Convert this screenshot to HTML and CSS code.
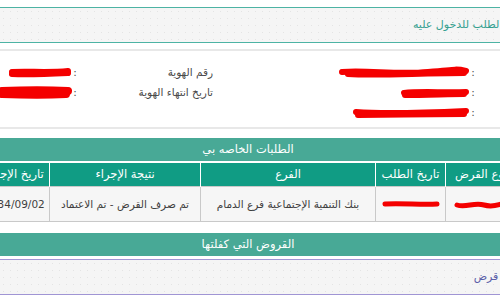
FILE: index.html
```html
<!DOCTYPE html>
<html lang="ar">
<head>
  <meta charset="UTF-8" />
  <title>طلباتي</title>
  <link rel="stylesheet" href="styles.css">
</head>
<body>
  <div class="page">
    <div class="alert notice">اضغط على الطلب للدخول عليه</div>

    <div class="info">
      <div class="info-col">
        <div class="info-row">
          <span class="label">الاسم</span><span class="colon">:</span>
          <span class="value"><svg class="scribble" width="132" height="12" viewBox="0 0 132 12"><path d="M4 6 C 30 4, 60 9, 90 6 S 120 3, 128 5" /><path d="M10 8 C 40 10, 80 7, 126 7" /></svg></span>
        </div>
        <div class="info-row">
          <span class="label">رقم الجوال</span><span class="colon">:</span>
          <span class="value"><svg class="scribble" width="70" height="11" viewBox="0 0 70 11"><path d="M4 6 C 20 4, 45 6, 66 5" /><path d="M5 8 C 25 8, 50 7, 64 7" /></svg></span>
        </div>
        <div class="info-row">
          <span class="label">تاريخ الميلاد</span><span class="colon">:</span>
          <span class="value"><svg class="scribble" width="118" height="11" viewBox="0 0 118 11"><path d="M4 5 C 30 7, 70 6, 114 4" /><path d="M6 8 C 40 8, 80 7, 112 7" /></svg></span>
        </div>
      </div>
      <div class="info-col">
        <div class="info-row">
          <span class="label">رقم الهوية</span><span class="colon">:</span>
          <span class="value"><svg class="scribble" width="64" height="11" viewBox="0 0 64 11"><path d="M4 5 C 20 4, 40 6, 60 4" /><path d="M4 7 C 20 8, 40 7, 60 6" /></svg></span>
        </div>
        <div class="info-row">
          <span class="label">تاريخ انتهاء الهوية</span><span class="colon">:</span>
          <span class="value"><svg class="scribble wide" width="72" height="13" viewBox="0 0 72 13"><path d="M2 5 C 25 4, 50 4, 68 5" /><path d="M2 8 C 25 9, 50 9, 66 8" /></svg></span>
        </div>
      </div>
    </div>

    <section class="block">
      <div class="bar">الطلبات الخاصه بي</div>
      <table class="requests">
        <thead>
          <tr>
            <th class="col-type">نوع القرض</th>
            <th class="col-date">تاريخ الطلب</th>
            <th class="col-branch">الفرع</th>
            <th class="col-result">نتيجة الإجراء</th>
            <th class="col-date">تاريخ الإجراء</th>
          </tr>
        </thead>
        <tbody>
          <tr>
            <td><svg class="scribble thin" width="54" height="12" viewBox="0 0 54 12"><path d="M3 7 C 12 10, 20 4, 30 7 S 45 6, 52 5" /></svg></td>
            <td><svg class="scribble thin" width="58" height="8" viewBox="0 0 58 8"><path d="M3 4 C 20 3, 40 5, 55 4" /></svg></td>
            <td>بنك التنمية الإجتماعية فرع الدمام</td>
            <td>تم صرف القرض - تم الاعتماد</td>
            <td>1434/09/02</td>
          </tr>
        </tbody>
      </table>
    </section>

    <section class="block">
      <div class="bar">القروض التي كفلتها</div>
      <div class="alert empty">لا يوجد أي قرض</div>
    </section>
  </div>
</body>
</html>
```

FILE: styles.css
```css
* {
  box-sizing: border-box;
}

body {
  margin: 0;
  width: 500px;
  height: 300px;
  overflow: hidden;
  background: #fff;
  font-family: "DejaVu Sans", sans-serif;
}

.page {
  direction: rtl;
  width: 538px;
  margin-left: -21px;
  padding-top: 7px;
}

.alert {
  margin-right: -54px;
  padding: 0 14px;
  background-color: #f5f5f5;
  background-image: radial-gradient(#e4e4e4 0.7px, transparent 1px);
  background-size: 7px 7px;
  font-size: 11px;
}

.notice {
  height: 36px;
  line-height: 34px;
  border-top: 1px solid #4db3a4;
  border-bottom: 1px solid #4db3a4;
  color: #34a090;
}

.empty {
  margin-top: 3px;
  height: 36px;
  line-height: 34px;
  padding-right: 23px;
  border-top: 1px solid #a095d4;
  border-bottom: 1px solid #a095d4;
  color: #5a5ea8;
}

.info {
  display: grid;
  grid-template-columns: 398px 1fr;
  margin-top: 6px;
  margin-right: -104px;
  padding: 11px 0 5px;
  border-top: 2px solid #e8e8e8;
  border-bottom: 2px solid #e8e8e8;
}

.info-row {
  display: grid;
  grid-template-columns: 135px 6px 1fr;
  align-items: center;
  height: 20px;
  padding-right: 10px;
  font-size: 10.5px;
  color: #4a4a4a;
}

.colon {
  text-align: center;
}

.value {
  display: flex;
  justify-content: flex-start;
}

.scribble {
  display: block;
  fill: none;
  stroke: #f40000;
  stroke-width: 6;
  stroke-linecap: round;
}

.scribble.wide {
  stroke-width: 8;
}

.scribble.thin {
  stroke-width: 5;
  margin: 0 auto;
}

.block {
  margin-top: 9px;
}

.block + .block {
  margin-top: 11px;
}

.bar {
  height: 23px;
  line-height: 23px;
  background-color: #48a996;
  color: #fff;
  text-align: center;
  font-size: 11.5px;
}

.requests {
  width: 538px;
  margin-top: 2px;
  border-collapse: collapse;
  table-layout: fixed;
  font-size: 10.5px;
}

.requests th {
  height: 23px;
  padding: 0;
  background-color: #109c84;
  color: #fff;
  font-weight: normal;
  font-size: 11.5px;
  border-left: 1px solid #fff;
}

.requests td {
  height: 35px;
  padding: 0;
  background-color: #f6f6f6;
  color: #3f3f3f;
  text-align: center;
  border: 1px solid #c9c9c9;
}

.col-type {
  width: 71px;
}

.col-date {
  width: 70px;
}

.col-branch {
  width: 175px;
}

.col-result {
  width: 151px;
}
```
